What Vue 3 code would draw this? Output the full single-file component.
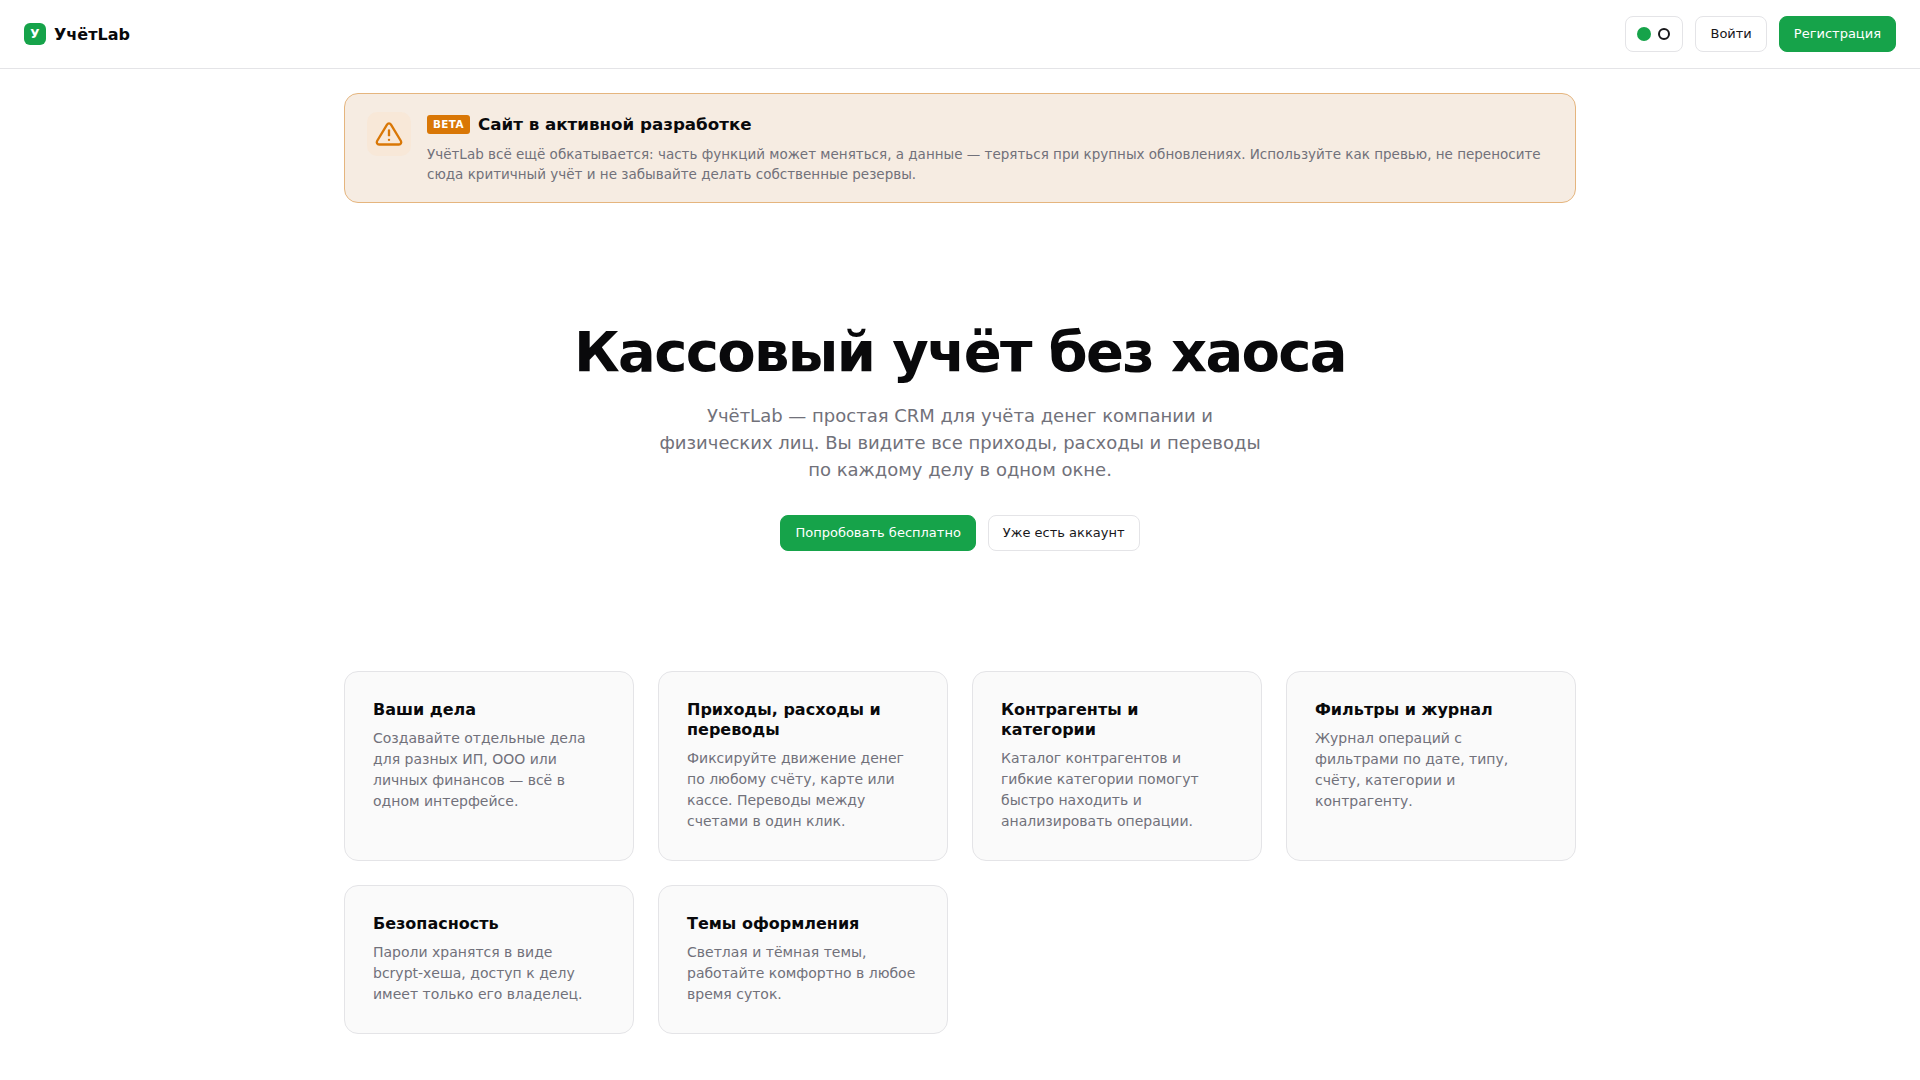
<template>
  <div class="page">
    <header class="topbar">
      <a class="brand">
        <span class="logo">У</span>
        <span class="brand-name">УчётLab</span>
      </a>
      <div class="actions">
        <div class="theme">
          <span class="dot-on"></span>
          <span class="dot-off"></span>
        </div>
        <button class="btn ghost">Войти</button>
        <button class="btn primary">Регистрация</button>
      </div>
    </header>
    <main class="container">
      <section class="banner">
        <div class="banner-icon">
          <svg width="28" height="28" viewBox="0 0 24 24" fill="none" stroke="#d97706" stroke-width="2" stroke-linecap="round" stroke-linejoin="round">
            <path d="M10.3 3.9 1.8 18a2 2 0 0 0 1.7 3h17a2 2 0 0 0 1.7-3L13.7 3.9a2 2 0 0 0-3.4 0z" />
            <path d="M12 9v4" />
            <path d="M12 17h.01" />
          </svg>
        </div>
        <div class="banner-body">
          <div class="banner-head">
            <span class="badge">BETA</span>
            <span class="banner-title">Сайт в активной разработке</span>
          </div>
          <p class="banner-text">УчётLab всё ещё обкатывается: часть функций может меняться, а данные — теряться при крупных обновлениях. Используйте как превью, не переносите сюда критичный учёт и не забывайте делать собственные резервы.</p>
        </div>
      </section>
      <section class="hero">
        <h1>Кассовый учёт без хаоса</h1>
        <p class="lead">УчётLab — простая CRM для учёта денег компании и физических лиц. Вы видите все приходы, расходы и переводы по каждому делу в одном окне.</p>
        <div class="cta">
          <button class="btn primary">Попробовать бесплатно</button>
          <button class="btn ghost">Уже есть аккаунт</button>
        </div>
      </section>
      <section class="grid">
        <article v-for="c in cards" :key="c.title" class="card">
          <h3>{{ c.title }}</h3>
          <p>{{ c.text }}</p>
        </article>
      </section>
    </main>
  </div>
</template>

<script setup>
const cards = [
  { title: 'Ваши дела', text: 'Создавайте отдельные дела для разных ИП, ООО или личных финансов — всё в одном интерфейсе.' },
  { title: 'Приходы, расходы и переводы', text: 'Фиксируйте движение денег по любому счёту, карте или кассе. Переводы между счетами в один клик.' },
  { title: 'Контрагенты и категории', text: 'Каталог контрагентов и гибкие категории помогут быстро находить и анализировать операции.' },
  { title: 'Фильтры и журнал', text: 'Журнал операций с фильтрами по дате, типу, счёту, категории и контрагенту.' },
  { title: 'Безопасность', text: 'Пароли хранятся в виде bcrypt-хеша, доступ к делу имеет только его владелец.' },
  { title: 'Темы оформления', text: 'Светлая и тёмная темы, работайте комфортно в любое время суток.' }
]
</script>

<style>
html, body { margin: 0; background: #ffffff; }
</style>

<style scoped>
.page {
  min-height: 1080px;
  background: #fff;
  color: #09090b;
  font-family: "DejaVu Sans", sans-serif;
}
.topbar {
  height: 68px;
  border-bottom: 1px solid #e4e4e7;
  display: flex;
  align-items: center;
  justify-content: space-between;
  padding: 0 24px;
}
.brand { display: flex; align-items: center; gap: 8px; }
.logo {
  width: 22px; height: 22px;
  border-radius: 6px;
  background: #16a34a;
  color: #fff;
  font-size: 12px;
  font-weight: 700;
  display: flex; align-items: center; justify-content: center;
}
.brand-name { font-size: 16px; font-weight: 700; }
.actions { display: flex; align-items: center; gap: 12px; }
.theme {
  height: 36px;
  width: 58px;
  box-sizing: border-box;
  border: 1px solid #e4e4e7;
  border-radius: 8px;
  display: flex; align-items: center;
  padding-left: 11px;
  gap: 7px;
}
.dot-on { width: 14px; height: 14px; border-radius: 50%; background: #16a34a; }
.dot-off { width: 12px; height: 12px; box-sizing: border-box; border-radius: 50%; border: 2px solid #18181b; }
.btn {
  font-family: inherit;
  font-size: 13px;
  height: 36px;
  box-sizing: border-box;
  padding: 0 14px 1px;
  border-radius: 8px;
  cursor: pointer;
}
.ghost { background: #fff; border: 1px solid #e4e4e7; color: #18181b; }
.primary { background: #16a34a; border: 1px solid #16a34a; color: #fff; }
.container {
  max-width: 1232px;
  margin: 0 auto;
  padding-top: 24px;
}
.banner {
  display: flex;
  gap: 16px;
  padding: 18px 22px;
  background: #f6ece2;
  border: 1px solid #e5b57e;
  border-radius: 14px;
}
.banner-icon {
  flex: none;
  width: 44px; height: 44px;
  border-radius: 10px;
  background: #f8e8d8;
  display: flex; align-items: center; justify-content: center;
}
.banner-body { flex: 1; min-width: 0; }
.banner-head { display: flex; align-items: center; gap: 8px; height: 24px; }
.badge {
  background: #d97706;
  color: #fff;
  font-size: 10.4px;
  font-weight: 700;
  letter-spacing: 0.4px;
  padding: 2px 6px;
  border-radius: 3px;
  line-height: 15px;
}
.banner-title { font-size: 16.7px; font-weight: 700; }
.banner-text {
  margin: 8px 0 0;
  font-size: 13.5px;
  line-height: 20px;
  color: #71717a;
}
.hero {
  text-align: center;
  padding-top: 119px;
}
.hero h1 {
  margin: 0;
  font-size: 56px;
  line-height: 60px;
  font-weight: 700;
  letter-spacing: -1.68px;
}
.lead {
  margin: 20px auto 0;
  width: 620px;
  font-size: 18px;
  line-height: 27px;
  color: #71717a;
}
.cta {
  margin-top: 32px;
  display: flex;
  justify-content: center;
  gap: 12px;
}
.grid {
  margin-top: 120px;
  display: grid;
  grid-template-columns: repeat(4, 1fr);
  gap: 24px;
}
.card {
  box-sizing: border-box;
  padding: 28px;
  background: #fafafa;
  border: 1px solid #e4e4e7;
  border-radius: 14px;
}
.card h3 {
  margin: 0;
  font-size: 16px;
  line-height: 20px;
  font-weight: 700;
}
.card p {
  margin: 8px 0 0;
  font-size: 14px;
  line-height: 21px;
  color: #71717a;
}
</style>
